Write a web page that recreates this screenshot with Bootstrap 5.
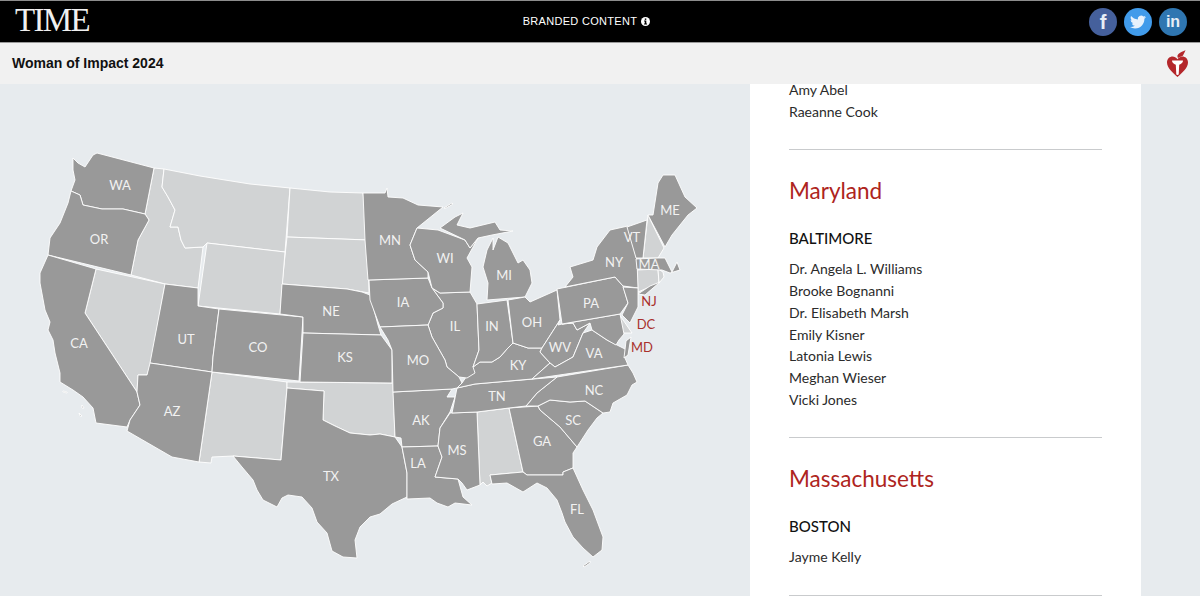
<!DOCTYPE html>
<html lang="en">
<head>
<meta charset="UTF-8">
<title>Woman of Impact 2024</title>
<link href="https://cdn.jsdelivr.net/npm/bootstrap@5.3.0/dist/css/bootstrap.min.css" rel="stylesheet">
<style>
  html, body { height: 596px; overflow: hidden; }
  body { background: #e7ebee; font-family: Lato, "Noto Sans", sans-serif; color: #222; }

  .top-strip { height: 43px; background: #000; border-top: 1px solid #8c8c8c; border-bottom: 1px solid #9a9a9a; padding: 0 13px 0 15px; }
  .time-logo { font-family: "Liberation Serif", serif; font-size: 33px; line-height: 1; letter-spacing: -1.7px; color: #f0f0f0; margin-top: -2px; }
  .branded { font-family: "Liberation Sans", sans-serif; font-size: 11px; letter-spacing: .3px; color: #fff; margin-right: 5px; }
  .social-dot { width: 28px; height: 28px; font-family: "Liberation Sans", sans-serif; font-weight: 700; color: #e8eef6; line-height: 1; }
  .social-row { gap: 7px; }
  .dot-fb { background: #45609c; font-size: 20px; }
  .dot-tw { background: #419bea; }
  .dot-li { background: #2f76b1; font-size: 16px; }

  .sub-strip { height: 41px; background: #f1f1f1; padding: 0 11px 0 12px; }
  .sub-title { font-family: "Liberation Sans", sans-serif; font-size: 14px; font-weight: 700; color: #111; }

  .map-pane { width: 750px; height: 512px; }
  .us-map { display: block; }
  .us-map polygon { stroke: #fff; stroke-width: .9; stroke-linejoin: round; }
  .st-on { fill: #999; }
  .st-off { fill: #d1d3d4; }
  .us-map text { font-family: Lato, "Noto Sans", sans-serif; font-size: 13px; text-anchor: middle; fill: #f2f2f2; }
  .us-map text.st-red { fill: #a9302c; }

  .list-pane { width: 391px; height: 512px; background: #fff; padding: 0 39px; }
  .name-list { list-style: none; margin: 0; padding: 0; font-size: 14px; line-height: 21.8px; color: #2b2b2b; }
  .first-list li:first-child { line-height: 12px; margin-bottom: 5px; }
  .state-name { font-family: Lato, "Noto Sans", sans-serif; font-size: 22.5px; line-height: 28px; font-weight: 400; color: #ae2420; margin: 27px 0 23px; }
  .city-name { font-size: 15px; line-height: 20px; font-weight: 500; color: #111; margin: 0 0 10px; }
  .state-rule { margin: 26.5px 0 0; border: 0; border-top: 1px solid #c9cbcd; opacity: 1; }
</style>
</head>
<body>
  <div class="top-strip d-flex justify-content-between align-items-center">
    <div class="time-logo">TIME</div>
    <div class="branded d-flex align-items-center gap-1">BRANDED CONTENT
      <svg width="9" height="9" viewBox="0 0 10 10"><circle cx="5" cy="5" r="5" fill="#fff"/><rect x="4.2" y="1.6" width="1.7" height="1.6" fill="#000"/><path d="M3.4 4h2.500v3.300h.8v1H3.400v-1h.8V5h-.8z" fill="#000"/></svg>
    </div>
    <div class="social-row d-flex">
      <div class="social-dot dot-fb rounded-circle d-flex align-items-center justify-content-center">f</div>
      <div class="social-dot dot-tw rounded-circle d-flex align-items-center justify-content-center">
        <svg width="16" height="16" viewBox="0 0 24 24"><path fill="#e8f2fc" d="M23.953 4.57a10 10 0 01-2.825.775 4.958 4.958 0 002.163-2.723c-.951.555-2.005.959-3.127 1.184a4.92 4.92 0 00-8.384 4.482C7.69 8.095 4.067 6.13 1.64 3.162a4.822 4.822 0 00-.666 2.475c0 1.71.87 3.213 2.188 4.096a4.904 4.904 0 01-2.228-.616v.06a4.923 4.923 0 003.946 4.827 4.996 4.996 0 01-2.212.085 4.936 4.936 0 004.604 3.417 9.867 9.867 0 01-6.102 2.105c-.39 0-.779-.023-1.17-.067a13.995 13.995 0 007.557 2.209c9.053 0 13.998-7.496 13.998-13.985 0-.21 0-.42-.015-.63A9.935 9.935 0 0024 4.59z"/></svg>
      </div>
      <div class="social-dot dot-li rounded-circle d-flex align-items-center justify-content-center">in</div>
    </div>
  </div>

  <div class="sub-strip d-flex justify-content-between align-items-center">
    <div class="sub-title">Woman of Impact 2024</div>
    <svg width="23" height="28" viewBox="0 0 23 28">
      <path fill="#b4272b" d="M11.500 27C7 23 1 18 1 12.500 1 8.500 4 6.500 6.500 6.500c2 0 3.500 1 5 2.800 1.500-1.800 3-2.800 5-2.800 2.500 0 5.500 2 5.500 6C22 18 16 23 11.500 27z"/>
      <path fill="#b4272b" d="M12 8c-1.500-3 .5-4 2.500-5.500C16.500 1.500 18 1 19.500 0c-.5 2-1.500 3-2 4.500-.5 2-3 2-5.500 3.500z"/>
      <path fill="#fff" d="M6 10.500h11c0 2-1.500 3.500-3.800 4.200l-.5 9.800c-.7.6-1.700.6-2.400 0l-.5-9.800C7.500 14 6 12.500 6 10.500z"/>
    </svg>
  </div>

  <div class="d-flex">
    <div class="map-pane">
      <svg class="us-map" width="750" height="512" viewBox="0 84 750 512">
        <!-- light states -->
        <polygon class="st-off" points="154,168 164,169 162,187 168,197 175,210 170,227 178,227 181,240 185,248 203,247 198,288 165,284 131,275 138,240 149,220 145,214"/>
        <polygon class="st-off" points="164,169 200,176 250,184 290,188 285,252 207,243 203,247 185,248 181,240 178,227 170,227 175,210 168,197 162,187"/>
        <polygon class="st-off" points="290,188 330,192 363,193 366,215 368,240 287,237"/>
        <polygon class="st-off" points="287,237 368,240 368,247 369,293 358,291 347,289 282,284"/>
        <polygon class="st-off" points="207,243 285,252 280,314 198,306"/>
        <polygon class="st-off" points="96,269 165,284 151,363 147,375 138,375 137,392 85,313"/>
        <polygon class="st-off" points="212,372 287,382 287,388 281,460 233,456 212,457 211,463 199,462"/>
        <polygon class="st-off" points="287,382 393,383 395,437 380,434 370,435 350,433 335,426 323,420 324,391 287,388"/>
        <polygon class="st-off" points="477,412 509,408 523,472 490,475 492,483 487,486 483,482 480,485"/>
        <polygon class="st-off" points="648,215 664,248 658,258 643,258"/>
        <polygon class="st-off" points="637,270 658,269 659,283 638,292"/>
        <polygon class="st-off" points="658,269 663,272 664,277 659,283"/>
        <polygon class="st-off" points="619,314 632,333 623,333"/>
        <!-- dark states -->
        <polygon class="st-on" points="73,158 73,170 75,180 71,191 80,195 83,205 102,209 123,209 145,214 154,168 97,153 93,155 85,167 78,163"/>
        <polygon class="st-on" points="71,191 68,203 60,223 50,238 48,255 131,275 138,240 149,220 145,214 123,209 102,209 83,205 80,195"/>
        <polygon class="st-on" points="48,255 40,273 40,283 45,310 50,322 48,330 53,340 55,353 60,373 60,382 73,390 83,397 93,408 96,423 127,427 130,420 140,405 137,392 85,313 96,269"/>
        <polygon class="st-on" points="165,284 198,288 198,306 219,309 213,357 212,372 150,363"/>
        <polygon class="st-on" points="219,309 303,317 299,381 212,372 213,357"/>
        <polygon class="st-on" points="150,363 212,372 199,462 172,457 127,431 130,420 140,405 137,392 138,375 147,375"/>
        <polygon class="st-on" points="282,284 347,289 362,292 370,295 378,325 381,335 303,333 303,317 280,314"/>
        <polygon class="st-on" points="303,333 381,335 392,350 392,383 300,382"/>
        <polygon class="st-on" points="287,388 324,391 323,420 335,426 350,433 370,435 380,434 395,437 402,447 407,473 407,497 392,504 380,514 370,517 360,527 355,540 357,558 343,557 332,551 327,533 317,522 312,508 302,497 288,495 282,498 277,507 263,500 257,490 253,480 242,467 233,456 281,460"/>
        <polygon class="st-on" points="393,392 452,389 447,397 455,397 450,412 440,428 438,446 402,447 401,438 395,437"/>
        <polygon class="st-on" points="402,447 438,446 442,457 435,477 458,479 463,497 472,505 455,503 448,507 437,503 430,498 407,499 407,473"/>
        <polygon class="st-on" points="450,413 477,412 480,485 467,490 462,483 458,479 435,477 442,457 438,446 440,428"/>
        <polygon class="st-on" points="509,408 538,406 540,410 560,427 577,447 573,453 573,468 563,472 563,475 527,475 523,472"/>
        <polygon class="st-on" points="490,475 523,472 527,475 563,475 563,472 573,468 583,490 593,510 603,537 602,550 593,557 583,548 573,537 565,522 562,513 557,500 547,488 537,483 523,492 507,483 492,484"/>
        <polygon class="st-on" points="540,410 538,406 550,400 570,402 585,401 603,413 597,418 588,430 577,447 560,427"/>
        <polygon class="st-on" points="526,406 537,393 557,377 628,365 633,373 637,382 632,385 627,395 613,403 610,412 603,413 585,401 570,402 550,400 538,406"/>
        <polygon class="st-on" points="452,413 457,388 475,384 557,377 537,393 526,406 509,408 477,412"/>
        <polygon class="st-on" points="457,388 462,383 473,367 480,362 492,362 500,357 507,349 513,343 528,348 542,348 540,352 550,363 532,379 475,384"/>
        <polygon class="st-on" points="440,293 470,292 477,304 479,350 473,367 475,373 467,378 459,377 447,367 445,360 432,337 428,325 433,313 443,308 443,303 432,288"/>
        <polygon class="st-on" points="369,280 428,278 432,288 443,303 443,308 433,313 428,325 380,327 370,300"/>
        <polygon class="st-on" points="380,327 428,325 432,337 445,360 447,367 459,377 462,383 457,388 452,389 393,392 392,350 388,340"/>
        <polygon class="st-on" points="363,193 385,193 387,188 388,197 403,198 418,205 443,207 417,228 410,245 415,260 428,272 428,278 368,280 365,240"/>
        <polygon class="st-on" points="417,228 438,230 465,240 470,248 478,238 467,258 472,267 470,292 440,293 432,288 428,272 415,260 410,245"/>
        <polygon class="st-on" points="440,228 455,217 463,213 457,225 470,228 495,222 500,230 513,231 492,235 478,238 470,248 465,240"/>
        <polygon class="st-on" points="493,238 493,250 498,237 508,243 518,263 523,260 530,270 532,283 525,297 487,300 488,283 483,267 487,250"/>
        <polygon class="st-on" points="477,304 507,300 513,343 507,349 500,357 492,362 480,362 473,367 479,350"/>
        <polygon class="st-on" points="508,300 525,297 530,302 557,290 560,320 542,348 528,348 513,343"/>
        <polygon class="st-on" points="558,325 562,324 573,323 577,330 590,323 583,333 573,357 555,367 550,363 540,352 542,348 560,320"/>
        <polygon class="st-on" points="532,379 550,363 555,367 573,357 583,333 592,330 607,340 627,350 625,358 628,365"/>
        <polygon class="st-on" points="562,324 620,314 624,334 619,340 616,345 607,340 592,330 590,323 577,330 573,323"/>
        <polygon class="st-on" points="626,341 631,337 628,355 624,358"/>
        <polygon class="st-on" points="557,289 615,277 623,286 628,303 620,314 562,324"/>
        <polygon class="st-on" points="565,287 573,277 570,267 593,260 597,247 610,230 628,226 637,260 638,288 623,286 615,277"/>
        <polygon class="st-on" points="638,294 650,286 660,282 645,295"/>
        <polygon class="st-on" points="623,287 638,288 638,307 630,323 622,315 628,303"/>
        <polygon class="st-on" points="627,227 647,220 643,258 636,258"/>
        <polygon class="st-on" points="648,215 653,215 658,183 663,175 675,175 685,197 697,208 688,215 680,225 672,235 665,247"/>
        <polygon class="st-on" points="636,259 658,258 665,258 672,272 677,262 680,270 670,273 662,270 637,269"/>
        <!-- islands -->
        <polygon class="st-on" points="63,391 67,392 67,393 63,392"/>
        <polygon class="st-on" points="82,405 84,408 82,408"/>
        <polygon class="st-on" points="79,413 82,416 80,416"/>
        <polygon class="st-on" points="583,566 590,561 590,563 584,567"/>
        <polygon class="st-on" points="444,208 452,203 453,204 446,208"/>
        <!-- labels -->
        <text x="120" y="190">WA</text><text x="99" y="244">OR</text><text x="79" y="348">CA</text>
        <text x="186" y="344">UT</text><text x="258" y="352">CO</text><text x="172" y="416">AZ</text>
        <text x="331" y="316">NE</text><text x="345" y="362">KS</text><text x="331" y="481">TX</text>
        <text x="390" y="245">MN</text><text x="445" y="263">WI</text><text x="403" y="307">IA</text>
        <text x="418" y="365">MO</text><text x="421" y="425">AK</text><text x="418" y="468">LA</text>
        <text x="457" y="455">MS</text><text x="455" y="331">IL</text><text x="492" y="331">IN</text>
        <text x="532" y="327">OH</text><text x="518" y="370">KY</text><text x="497" y="401">TN</text>
        <text x="504" y="280">MI</text><text x="560" y="352">WV</text><text x="594" y="358">VA</text>
        <text x="594" y="395">NC</text><text x="573" y="425">SC</text><text x="542" y="446">GA</text>
        <text x="577" y="514">FL</text><text x="591" y="308">PA</text><text x="614" y="267">NY</text>
        <text x="632" y="242">VT</text><text x="649" y="269">MA</text><text x="670" y="215">ME</text>
        <text class="st-red" x="649" y="306">NJ</text><text class="st-red" x="646" y="329">DC</text><text class="st-red" x="642" y="352">MD</text>
      </svg>
    </div>
    <div class="list-pane">
      <ul class="name-list first-list">
        <li>Amy Abel</li>
        <li>Raeanne Cook</li>
      </ul>
      <hr class="state-rule">
      <h3 class="state-name">Maryland</h3>
      <h4 class="city-name">BALTIMORE</h4>
      <ul class="name-list">
        <li>Dr. Angela L. Williams</li>
        <li>Brooke Bognanni</li>
        <li>Dr. Elisabeth Marsh</li>
        <li>Emily Kisner</li>
        <li>Latonia Lewis</li>
        <li>Meghan Wieser</li>
        <li>Vicki Jones</li>
      </ul>
      <hr class="state-rule">
      <h3 class="state-name">Massachusetts</h3>
      <h4 class="city-name">BOSTON</h4>
      <ul class="name-list">
        <li>Jayme Kelly</li>
      </ul>
      <hr class="state-rule">
    </div>
  </div>
  <script src="https://cdn.jsdelivr.net/npm/bootstrap@5.3.0/dist/js/bootstrap.bundle.min.js"></script>
</body>
</html>
